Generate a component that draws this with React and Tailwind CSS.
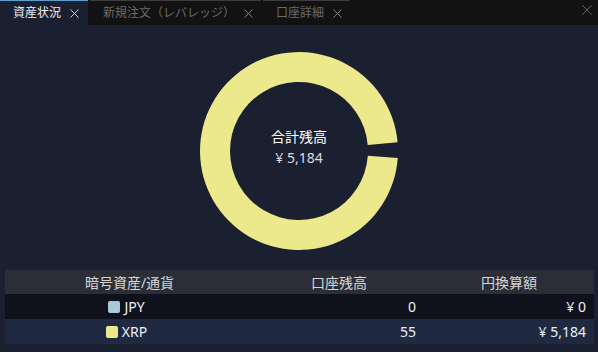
import { X } from 'lucide-react';

const rows = [
  { name: 'JPY', color: 'bg-[#a9c9d9]', bal: '0', yen: '¥ 0', bg: 'bg-[#0f121c]' },
  { name: 'XRP', color: 'bg-[#ece88c]', bal: '55', yen: '¥ 5,184', bg: 'bg-[#1f2941]' },
];

function Tab({ label, active, width }) {
  return (
    <div
      className={`flex shrink-0 items-center h-full pl-[13px] gap-[6px] border-t whitespace-nowrap ${width} ${
        active ? 'bg-[#1a2030] border-[#5a9fd4] text-[#f0f0f0]' : 'border-[#3d3d3d] text-[#6a6a6a]'
      }`}
    >
      <span className="text-[12px] leading-none">{label}</span>
      <X size={15} strokeWidth={1.5} className={`shrink-0 ${active ? 'text-[#d8d8d8]' : 'text-[#8a8a8a]'}`} />
    </div>
  );
}

export default function App() {
  return (
    <div className="w-[598px] h-[352px] bg-[#1a2030] flex flex-col font-['Noto_Sans','Noto_Sans_CJK_JP',sans-serif] overflow-hidden">
      <div className="h-[25px] shrink-0 bg-[#121212] flex items-stretch">
        <Tab label="資産状況" active width="w-[88px]" />
        <div className="w-[2px] shrink-0" />
        <Tab label="新規注文（レバレッジ）" width="w-[171px]" />
        <div className="w-[2px] shrink-0" />
        <Tab label="口座詳細" width="w-[87px]" />
        <div className="flex-1 flex justify-end items-start pt-[1px] pr-[2px]">
          <X size={18} strokeWidth={0.9} className="text-[#8a8a8a]" />
        </div>
      </div>

      <div className="flex justify-center pt-[26px]">
        <div className="relative w-[200px] h-[200px]">
          <svg width="200" height="200" viewBox="0 0 200 200">
            <path
              d="M 198.76 106.91 A 99 99 0 1 1 198.62 91.37 L 168.74 93.99 A 69 69 0 1 0 168.83 104.81 Z"
              fill="#ece88c"
            />
          </svg>
          <div className="absolute inset-0 flex flex-col items-center justify-center pb-[8px]">
            <span className="text-[14px] text-white leading-[21px]">合計残高</span>
            <span className="text-[14px] text-[#d8dbe2] leading-[21px]">¥ 5,184</span>
          </div>
        </div>
      </div>

      <div className="mt-[19px] mx-[5px] w-[589px] text-[14px]">
        <div className="grid grid-cols-[249px_170px_170px] h-[24px] bg-[#2b2e36] text-[#d6d6d6] items-center text-center">
          <span>暗号資産/通貨</span>
          <span>口座残高</span>
          <span>円換算額</span>
        </div>
        {rows.map((r) => (
          <div
            key={r.name}
            className={`grid grid-cols-[249px_170px_170px] h-[25px] items-center text-[#eef0f4] ${r.bg}`}
          >
            <div className="flex items-center justify-center gap-[4px] pr-[6px]">
              <span className={`w-[12px] h-[12px] rounded-[2px] ${r.color}`} />
              <span>{r.name}</span>
            </div>
            <span className="text-right pr-[8px]">{r.bal}</span>
            <span className="text-right pr-[8px]">{r.yen}</span>
          </div>
        ))}
      </div>
    </div>
  );
}
